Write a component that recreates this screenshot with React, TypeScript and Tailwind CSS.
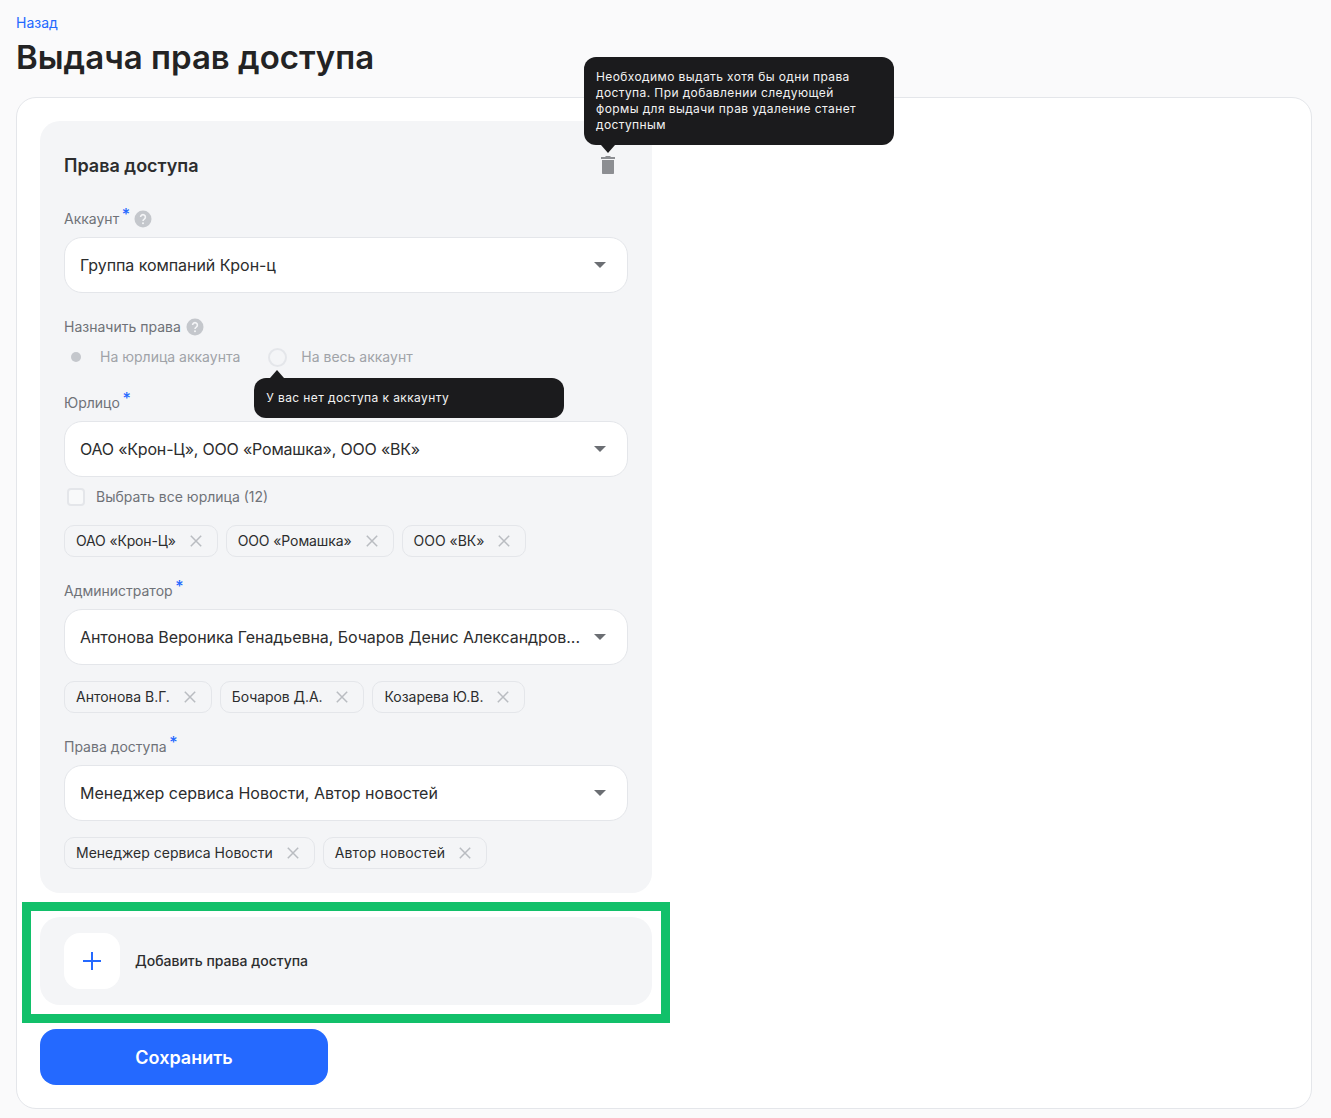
import React from "react";

const Star = () => <span className="absolute -top-[3px] -right-[11px] text-[16px] font-medium leading-none text-[#2469ff]">*</span>;

const Help = () => (
  <svg width="18" height="18" viewBox="0 0 18 18" className="shrink-0">
    <circle cx="9" cy="9" r="8.5" fill="#c4c7cc" />
    <path d="M6.600 7.100a2.400 2.400 0 1 1 3.700 2c-.8.500-1.300 1-1.300 1.800" fill="none" stroke="#f4f5f7" strokeWidth="1.6" />
    <circle cx="9" cy="13.200" r="1" fill="#f4f5f7" />
  </svg>
);

const Label = ({ text, required, help }: { text: string; required?: boolean; help?: boolean }) => (
  <div className="flex h-5 items-center gap-[5px] text-sm text-[#6f7278]">
    <span className={required ? "relative" : ""}>
      {text}
      {required && <Star />}
    </span>
    {help && <span className={required ? "ml-[10px]" : ""}><Help /></span>}
  </div>
);

const Select = ({ value, className }: { value: string; className?: string }) => (
  <div className="mt-2 flex h-14 items-center justify-between rounded-[18px] border border-[#e4e6ea] bg-white pl-[15px] pr-[21px] text-base text-[#2c2d2e]">
    <span className={className}>{value}</span>
    <svg width="12" height="6" viewBox="0 0 12 6"><path d="M0 0h12L6 6z" fill="#6b6e73" /></svg>
  </div>
);

const Chip = ({ text, className }: { text: string; className?: string }) => (
  <div className="flex h-8 items-center gap-[14px] rounded-[10px] border border-[#e4e6ea] pl-[11px] pr-[15px] text-sm text-[#2c2d2e]">
    <span className={className}>{text}</span>
    <svg width="12" height="12" viewBox="0 0 12 12"><path d="M.8.8l10.400 10.400M11.200.8L.8 11.200" stroke="#b9bcc1" strokeWidth="1.5" fill="none" /></svg>
  </div>
);

const Tooltip = ({ children, className }: { children: React.ReactNode; className: string }) => (
  <div className={`absolute z-10 rounded-xl bg-[#1b1b1d] text-xs leading-4 tracking-[0.4px] text-[#f2f2f2] ${className}`}>
    {children}
  </div>
);

export default function App() {
  return (
    <div className="min-h-[1118px] bg-[#fafafb] pb-[10px] pl-4 pr-[19px] pt-4 font-['Inter',sans-serif]">
      <a className="block text-sm leading-[14px] text-[#2469ff]">Назад</a>
      <h1 className="mt-[6px] text-[33px] font-semibold leading-[42px] text-[#232324]">Выдача прав доступа</h1>
      <div className="mt-[19px] rounded-[20px] border border-[#e4e6ea] bg-white p-[23px]">
        <section className="w-[612px] rounded-[20px] bg-[#f4f5f7] px-6 py-6">
          <div className="flex h-[42px] items-center justify-between">
            <h2 className="text-lg font-semibold text-[#2c2d2e]">Права доступа</h2>
            <div className="relative mb-[2px] mr-[13px]">
              <svg width="14" height="18" viewBox="0 0 14 18" className="block">
                <path d="M4.500 0h5v1H14v2H0V1h4.500zM1 4h12v13c0 .6-.4 1-1 1H2c-.6 0-1-.4-1-1z" fill="#8c8e92" />
              </svg>
              <Tooltip className="-left-[17px] -top-[99px] w-[310px] py-3 pl-3 pr-[37px]">
                Необходимо выдать хотя бы одни права доступа. При добавлении следующей формы для выдачи прав удаление станет доступным
                <span className="absolute left-[17px] top-full h-0 w-0 border-x-[7px] border-t-[8px] border-x-transparent border-t-[#1b1b1d]" />
              </Tooltip>
            </div>
          </div>

          <div className="mt-[22px]">
            <Label text="Аккаунт" required help />
            <Select value="Группа компаний Крон-ц" className="tracking-[-0.06px]" />
          </div>

          <div className="mt-6">
            <Label text="Назначить права" help />
            <div className="mt-[10px] flex h-5 items-center text-sm text-[#a0a3a8]">
              <span className="ml-[7px] h-[10px] w-[10px] rounded-full bg-[#c4c7cc]" />
              <span className="ml-[19px]">На юрлица аккаунта</span>
              <span className="relative ml-[28px] h-[19px] w-[19px] rounded-full border-2 border-[#e4e6ea]">
                <Tooltip className="-left-[16px] top-[28px] flex h-10 w-[310px] items-center px-3">
                  У вас нет доступа к аккаунту
                  <span className="absolute -top-[8px] left-[16px] h-0 w-0 border-x-[7px] border-b-[8px] border-x-transparent border-b-[#1b1b1d]" />
                </Tooltip>
              </span>
              <span className="ml-[14px]">На весь аккаунт</span>
            </div>
          </div>

          <div className="mt-[26px]">
            <Label text="Юрлицо" required />
            <Select value="ОАО «Крон-Ц», ООО «Ромашка», ООО «ВК»" className="tracking-[-0.19px]" />
            <div className="mt-[11px] flex h-[18px] items-center text-sm text-[#6f7278]">
              <span className="ml-[3px] h-[18px] w-[18px] rounded-[4px] border-2 border-[#e4e6ea] bg-[#f8f9fa]" />
              <span className="ml-[11px]">Выбрать все юрлица (12)</span>
            </div>
            <div className="mt-[19px] flex gap-2">
              <Chip text="ОАО «Крон-Ц»" className="tracking-[-0.16px]" />
              <Chip text="ООО «Ромашка»" className="tracking-[-0.1px]" />
              <Chip text="ООО «ВК»" className="tracking-[-0.02px]" />
            </div>
          </div>

          <div className="mt-6">
            <Label text="Администратор" required />
            <Select value="Антонова Вероника Генадьевна, Бочаров Денис Александров..." className="tracking-[-0.07px]" />
            <div className="mt-4 flex gap-2">
              <Chip text="Антонова В.Г." />
              <Chip text="Бочаров Д.А." className="tracking-[-0.08px]" />
              <Chip text="Козарева Ю.В." className="tracking-[-0.02px]" />
            </div>
          </div>

          <div className="mt-6">
            <Label text="Права доступа" required />
            <Select value="Менеджер сервиса Новости, Автор новостей" />
            <div className="mt-4 flex gap-2">
              <Chip text="Менеджер сервиса Новости" />
              <Chip text="Автор новостей" className="tracking-[0.14px]" />
            </div>
          </div>
        </section>

        <div className="relative mt-6 flex h-[88px] w-[612px] items-center gap-[15px] rounded-[20px] bg-[#f4f5f7] pl-6">
          <div className="flex h-14 w-14 items-center justify-center rounded-[16px] bg-white">
            <svg width="18" height="18" viewBox="0 0 18 18"><path d="M9 0v18M0 9h18" stroke="#2469ff" strokeWidth="2" fill="none" /></svg>
          </div>
          <span className="text-sm font-medium text-[#2c2d2e]">Добавить права доступа</span>
          <div className="absolute -bottom-[18px] -left-[18px] -right-[18px] -top-[15px] border-[9px] border-[#12c06a]" />
        </div>

        <button className="mt-6 block h-14 w-[288px] rounded-[16px] bg-[#2469ff] pt-px text-lg font-semibold text-white">Сохранить</button>
      </div>
    </div>
  );
}
